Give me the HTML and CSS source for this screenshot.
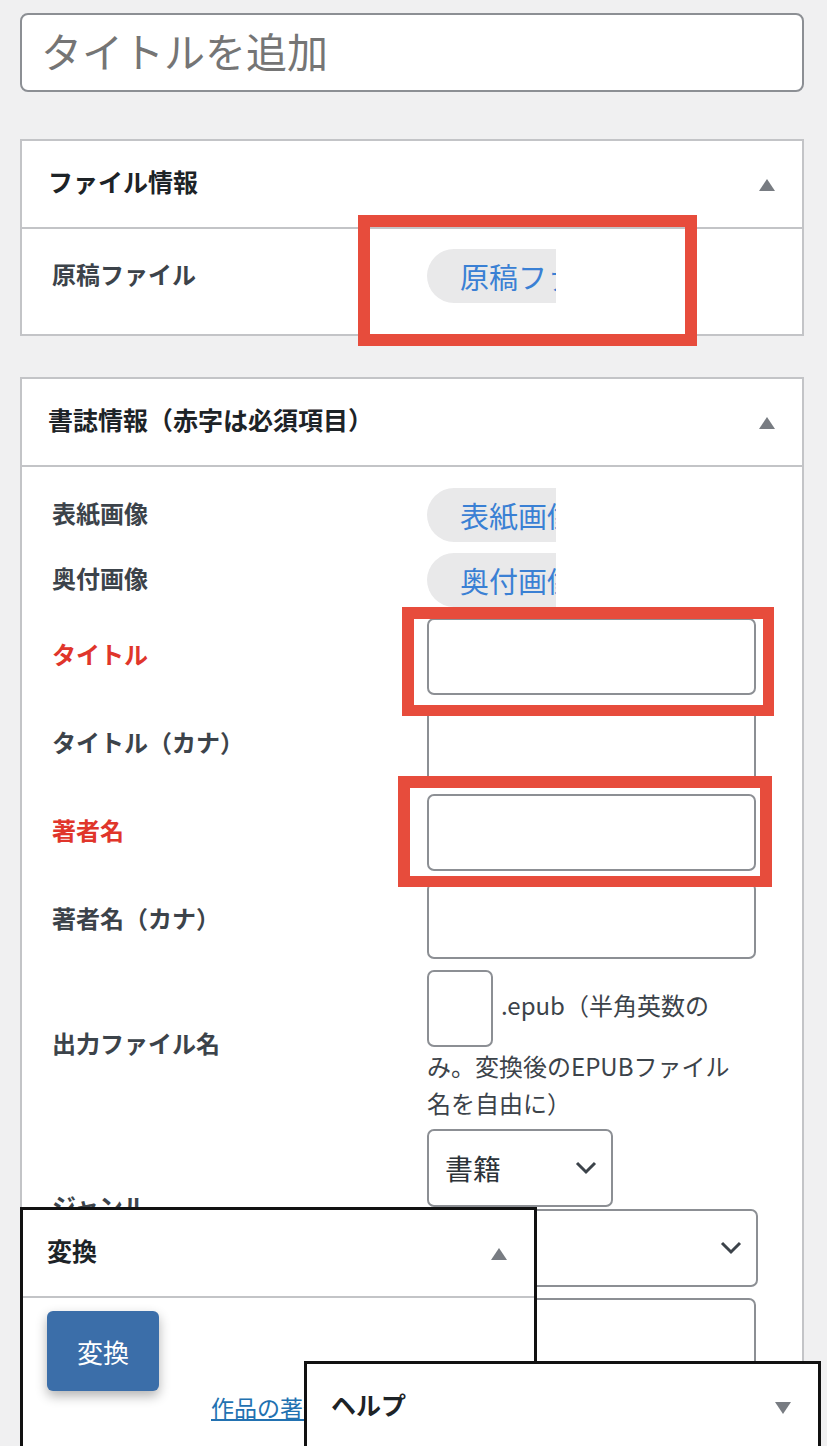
FILE: index.html
```html
<!DOCTYPE html>
<html lang="ja">
<head>
    <meta charset="UTF-8">
    <meta name="viewport" content="width=device-width, initial-scale=1.0">
    <title>新規投稿を追加</title>
    <link rel="stylesheet" href="styles.css">
</head>
<body>
    <div class="page">
        <input type="text" class="post-title" placeholder="タイトルを追加">

        <section class="panel panel-file">
            <div class="panel-header">
                <h2>ファイル情報</h2>
                <span class="toggle up"></span>
            </div>
            <div class="panel-body">
                <div class="row">
                    <label>原稿ファイル</label>
                    <div class="field">
                        <div class="pill"><button type="button">原稿ファイルを選択</button></div>
                    </div>
                </div>
            </div>
        </section>

        <section class="panel panel-book">
            <div class="panel-header">
                <h2>書誌情報（赤字は必須項目）</h2>
                <span class="toggle up"></span>
            </div>
            <div class="panel-body">
                <div class="row">
                    <label>表紙画像</label>
                    <div class="field">
                        <div class="pill"><button type="button">表紙画像を選択</button></div>
                    </div>
                </div>
                <div class="row">
                    <label>奥付画像</label>
                    <div class="field">
                        <div class="pill"><button type="button">奥付画像を選択</button></div>
                    </div>
                </div>
                <div class="row">
                    <label class="required">タイトル</label>
                    <div class="field"><input type="text" class="text-input"></div>
                </div>
                <div class="row">
                    <label>タイトル（カナ）</label>
                    <div class="field"><input type="text" class="text-input"></div>
                </div>
                <div class="row">
                    <label class="required">著者名</label>
                    <div class="field"><input type="text" class="text-input"></div>
                </div>
                <div class="row">
                    <label>著者名（カナ）</label>
                    <div class="field"><input type="text" class="text-input"></div>
                </div>
                <div class="row">
                    <label>出力ファイル名</label>
                    <div class="field note"><input type="text" class="text-input short">.epub（半角英数のみ。変換後のEPUBファイル名を自由に）</div>
                </div>
                <div class="row row-genre">
                    <label>ジャンル</label>
                    <div class="field stack">
                        <div class="select select-small">
                            <span>書籍</span>
                            <svg width="22" height="14" viewBox="0 0 22 14"><polyline points="2,2 11,11 20,2" fill="none" stroke="#3c434a" stroke-width="3"/></svg>
                        </div>
                        <div class="select">
                            <span></span>
                            <svg width="22" height="14" viewBox="0 0 22 14"><polyline points="2,2 11,11 20,2" fill="none" stroke="#3c434a" stroke-width="3"/></svg>
                        </div>
                    </div>
                </div>
                <div class="row">
                    <label>出版社</label>
                    <div class="field"><input type="text" class="text-input"></div>
                </div>
            </div>
        </section>
    </div>

    <!-- highlight marks drawn over the form -->
    <div class="highlight hl-file"></div>
    <div class="highlight hl-title"></div>
    <div class="highlight hl-author"></div>

    <section class="float-panel convert">
        <div class="panel-header">
            <h2>変換</h2>
            <span class="toggle up"></span>
        </div>
        <div class="convert-body">
            <button type="button" class="convert-btn">変換</button>
            <a href="#" class="credit-link">作品の著作権について</a>
        </div>
    </section>

    <section class="float-panel help">
        <div class="panel-header">
            <h2>ヘルプ</h2>
            <span class="toggle down"></span>
        </div>
    </section>
</body>
</html>
```

FILE: styles.css
```css
body {
    margin: 0;
    background-color: #f0f0f1;
    font-family: "Noto Sans CJK JP", "Noto Sans", sans-serif;
    color: #3c434a;
}
.page {
    width: 784px;
    padding: 13px 0 0 20px;
}
.post-title {
    display: block;
    box-sizing: border-box;
    width: 100%;
    height: 79px;
    padding: 0 0 6px 19px;
    border: 2px solid #8c8f94;
    border-radius: 8px;
    background: #fff;
    font-family: inherit;
    font-size: 41px;
}
.post-title::placeholder {
    color: #757575;
}
.panel {
    background: #fff;
    border: 2px solid #c3c4c7;
}
.panel-file {
    margin-top: 47px;
}
.panel-book {
    margin-top: 41px;
}
.panel-header {
    display: flex;
    align-items: center;
    justify-content: space-between;
    height: 86px;
    padding: 0 27px 0 26px;
    border-bottom: 2px solid #c3c4c7;
}
h2 {
    margin: 0;
    padding-bottom: 6px;
    font-size: 25px;
    font-weight: 700;
    color: #1d2327;
}
.toggle {
    width: 0;
    height: 0;
    margin-top: 2px;
    border-left: 8px solid transparent;
    border-right: 8px solid transparent;
}
.toggle.up {
    border-bottom: 12px solid #787c82;
}
.toggle.down {
    border-top: 12px solid #787c82;
}
.panel-body {
    display: flex;
    flex-direction: column;
    gap: 11px;
    padding: 20px 46px 31px 30px;
}
.panel-book .panel-body {
    padding-top: 21px;
}
.row {
    display: grid;
    grid-template-columns: 375px 329px;
    align-items: center;
}
.row label {
    padding-bottom: 6px;
    font-size: 24px;
    font-weight: 700;
    color: #3c434a;
}
.row label.required {
    color: #e0352b;
}
.pill {
    width: 129px;
    height: 54px;
    overflow: hidden;
}
.pill button {
    height: 54px;
    padding: 0 33px;
    border: none;
    border-radius: 27px;
    background: #e9e9ea;
    color: #3a80d4;
    font-family: inherit;
    font-size: 29px;
    white-space: nowrap;
}
.text-input {
    display: block;
    box-sizing: border-box;
    width: 100%;
    height: 77px;
    border: 2px solid #8c8f94;
    border-radius: 7px;
    background: #fff;
}
.note {
    width: 318px;
    font-size: 24px;
    line-height: 37px;
    color: #3c434a;
}
.text-input.short {
    display: inline-block;
    width: 66px;
    margin-right: 8px;
    vertical-align: middle;
}
.row-genre {
    margin-top: -3px;
}
.stack {
    display: flex;
    flex-direction: column;
    gap: 2px;
}
.select {
    display: flex;
    align-items: center;
    justify-content: space-between;
    box-sizing: border-box;
    width: 331px;
    height: 78px;
    padding: 0 14px 0 16px;
    border: 2px solid #8c8f94;
    border-radius: 7px;
    background: #fff;
    font-size: 28px;
    color: #2c3338;
}
.select-small {
    width: 186px;
}
.highlight {
    position: absolute;
    box-sizing: border-box;
    border: 12px solid #e74c3c;
}
.hl-file {
    left: 358px;
    top: 215px;
    width: 339px;
    height: 131px;
}
.hl-title {
    left: 402px;
    top: 607px;
    width: 372px;
    height: 109px;
    border-width: 12px 11px 11px 12px;
}
.hl-author {
    left: 398px;
    top: 776px;
    width: 374px;
    height: 111px;
    border-width: 12px 12px 11px 12px;
}
.float-panel {
    position: absolute;
    box-sizing: border-box;
    width: 517px;
    border: 3px solid #111;
    background: #fff;
}
.float-panel .panel-header {
    padding: 0 27px 0 24px;
}
.convert {
    left: 20px;
    top: 1207px;
    height: 260px;
}
.help {
    left: 304px;
    top: 1361px;
    height: 120px;
}
.convert-body {
    padding: 13px 24px;
}
.convert-btn {
    display: block;
    width: 112px;
    height: 80px;
    border: none;
    border-radius: 6px;
    background: #3b6ea9;
    color: #fff;
    font-family: inherit;
    font-size: 26px;
    box-shadow: 0 5px 12px rgba(0, 0, 0, 0.3);
}
.credit-link {
    display: block;
    margin-left: 164px;
    font-size: 23px;
    line-height: 32px;
    color: #2271b1;
    white-space: nowrap;
}
```
